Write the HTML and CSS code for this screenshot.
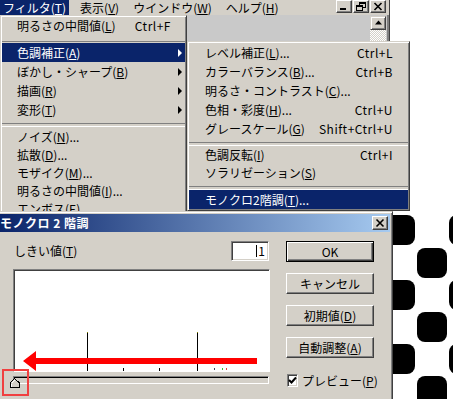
FILE: index.html
```html
<!DOCTYPE html>
<html lang="ja">
<head>
    <meta charset="UTF-8">
    <title>モノクロ 2 階調</title>
    <link rel="stylesheet" href="styles.css">
</head>
<body>
    <div class="app">
        <div class="menubar">
            <span class="menubar-item active">フィルタ(<u>T</u>)</span>
            <span class="menubar-item">表示(<u>V</u>)</span>
            <span class="menubar-item">ウインドウ(<u>W</u>)</span>
            <span class="menubar-item">ヘルプ(<u>H</u>)</span>
            <div class="window-controls">
                <span class="ctl-btn">
                    <svg width="14" height="11" viewBox="0 0 14 11"><rect x="3" y="7" width="6" height="2" fill="#000"/></svg>
                </span>
                <span class="ctl-btn">
                    <svg width="14" height="11" viewBox="0 0 14 11" shape-rendering="crispEdges">
                        <rect x="5.5" y="1.5" width="6" height="5" fill="none" stroke="#000"/>
                        <rect x="5" y="1" width="7" height="2" fill="#000"/>
                        <rect x="2.5" y="4.5" width="6" height="5" fill="#d4d0c8" stroke="#000"/>
                        <rect x="2" y="4" width="7" height="2" fill="#000"/>
                    </svg>
                </span>
                <span class="ctl-btn">
                    <svg width="14" height="11" viewBox="0 0 14 11"><path d="M3.5 2l7 7M10.5 2l-7 7" stroke="#000" stroke-width="1.6"/></svg>
                </span>
            </div>
        </div>
        <div class="workspace">
            <div class="scrollbar">
                <span class="scroll-btn">
                    <svg width="13" height="12" viewBox="0 0 13 12"><polygon points="6.5,3.5 10,7.5 3,7.5" fill="#000"/></svg>
                </span>
                <span class="scroll-track"></span>
            </div>
        </div>
    </div>

    <div class="menu filter-menu">
        <div class="menu-item">
            <span class="label">明るさの中間値(<u>L</u>)</span>
            <span class="shortcut">Ctrl+F</span>
        </div>
        <div class="separator first"></div>
        <div class="menu-section roomy">
            <div class="menu-item active">
                <span class="label">色調補正(<u>A</u>)</span>
                <span class="arrow"></span>
            </div>
            <div class="menu-item">
                <span class="label">ぼかし・シャープ(<u>B</u>)</span>
                <span class="arrow"></span>
            </div>
            <div class="menu-item">
                <span class="label">描画(<u>R</u>)</span>
                <span class="arrow"></span>
            </div>
            <div class="menu-item">
                <span class="label">変形(<u>T</u>)</span>
                <span class="arrow"></span>
            </div>
        </div>
        <div class="separator wide"></div>
        <div class="menu-section">
            <div class="menu-item"><span class="label">ノイズ(<u>N</u>)...</span></div>
            <div class="menu-item"><span class="label">拡散(<u>D</u>)...</span></div>
            <div class="menu-item"><span class="label">モザイク(<u>M</u>)...</span></div>
            <div class="menu-item"><span class="label">明るさの中間値(<u>I</u>)...</span></div>
            <div class="menu-item"><span class="label">エンボス(<u>E</u>)...</span></div>
        </div>
    </div>

    <div class="menu adjust-menu">
        <div class="menu-section roomy">
            <div class="menu-item">
                <span class="label">レベル補正(<u>L</u>)...</span>
                <span class="shortcut">Ctrl+L</span>
            </div>
            <div class="menu-item">
                <span class="label">カラーバランス(<u>B</u>)...</span>
                <span class="shortcut">Ctrl+B</span>
            </div>
            <div class="menu-item">
                <span class="label">明るさ・コントラスト(<u>C</u>)...</span>
            </div>
            <div class="menu-item">
                <span class="label">色相・彩度(<u>H</u>)...</span>
                <span class="shortcut">Ctrl+U</span>
            </div>
            <div class="menu-item">
                <span class="label">グレースケール(<u>G</u>)</span>
                <span class="shortcut">Shift+Ctrl+U</span>
            </div>
        </div>
        <div class="separator"></div>
        <div class="menu-section">
            <div class="menu-item">
                <span class="label">色調反転(<u>I</u>)</span>
                <span class="shortcut">Ctrl+I</span>
            </div>
            <div class="menu-item">
                <span class="label">ソラリゼーション(<u>S</u>)</span>
            </div>
        </div>
        <div class="separator"></div>
        <div class="menu-section roomy">
            <div class="menu-item active">
                <span class="label">モノクロ2階調(<u>T</u>)...</span>
            </div>
        </div>
    </div>

    <div class="dots">
        <svg width="73" height="186" viewBox="0 0 73 186">
            <rect x="5" y="2" width="30" height="30" rx="8" fill="#000"/>
            <rect x="5" y="67" width="30" height="30" rx="8" fill="#000"/>
            <rect x="5" y="131" width="30" height="30" rx="8" fill="#000"/>
            <rect x="37" y="35" width="30" height="30" rx="8" fill="#000"/>
            <rect x="37" y="99" width="30" height="30" rx="8" fill="#000"/>
            <rect x="37" y="163" width="30" height="30" rx="8" fill="#000"/>
            <rect x="69" y="2" width="30" height="30" rx="8" fill="#000"/>
            <rect x="69" y="67" width="30" height="30" rx="8" fill="#000"/>
            <rect x="69" y="131" width="30" height="30" rx="8" fill="#000"/>
        </svg>
    </div>

    <div class="dialog">
        <div class="titlebar">
            <span class="title">モノクロ 2 階調</span>
            <span class="caption-btn">
                <svg width="14" height="12" viewBox="0 0 14 12"><path d="M3.5 2.5l7 7M10.5 2.5l-7 7" stroke="#000" stroke-width="1.6"/></svg>
            </span>
        </div>
        <div class="dialog-body">
            <div class="left-col">
                <div class="field-row">
                    <span class="field-label">しきい値(<u>T</u>)</span>
                    <div class="text-input"><span class="caret"></span>1</div>
                </div>
                <div class="histogram">
                    <svg width="253" height="100" viewBox="0 0 253 100" shape-rendering="crispEdges">
                        <rect x="72" y="61" width="1" height="39" fill="#000"/>
                        <rect x="72" y="61" width="1" height="1" fill="#808000"/>
                        <rect x="182" y="61" width="1" height="39" fill="#000"/>
                        <rect x="182" y="61" width="1" height="1" fill="#808000"/>
                        <rect x="108" y="97" width="1" height="3" fill="#000"/>
                        <rect x="144" y="97" width="1" height="3" fill="#000"/>
                        <rect x="199" y="97" width="1" height="2" fill="#404060"/>
                        <rect x="207" y="97" width="1" height="2" fill="#30c030"/>
                        <rect x="211" y="97" width="1" height="2" fill="#e04040"/>
                    </svg>
                </div>
                <div class="slider">
                    <div class="track"></div>
                    <svg class="thumb" width="10" height="10" viewBox="0 0 10 10" shape-rendering="crispEdges">
                        <polygon points="4.5,0.5 9.5,5 9.5,9.5 0.5,9.5 0.5,4.5" fill="#d4d0c8" stroke="#000"/>
                        <path d="M1.5 5.5 L4.5 2.5 M1.5 5.5 V8.5" stroke="#fff" fill="none"/>
                    </svg>
                </div>
            </div>
            <div class="right-col">
                <button class="btn default">OK</button>
                <button class="btn">キャンセル</button>
                <button class="btn">初期値(<u>D</u>)</button>
                <button class="btn">自動調整(<u>A</u>)</button>
                <div class="check-row">
                    <span class="checkbox">
                        <svg width="9" height="9" viewBox="0 0 9 9"><path d="M1 4 L3.5 6.5 L8 1.5" stroke="#000" stroke-width="2" fill="none"/></svg>
                    </span>
                    <span>プレビュー(<u>P</u>)</span>
                </div>
            </div>
        </div>
    </div>

    <svg class="annotation" width="453" height="399" viewBox="0 0 453 399">
        <polygon points="23,361 36,351 36,358 257,358 257,364 36,364 36,371" fill="#ff0000"/>
        <rect x="3" y="370" width="25" height="25" fill="none" stroke="#f04040" stroke-width="2"/>
    </svg>
</body>
</html>
```

FILE: styles.css
```css
* {
    box-sizing: border-box;
}
body {
    margin: 0;
    width: 453px;
    height: 399px;
    overflow: hidden;
    position: relative;
    background-color: #fff;
    font-family: "Noto Sans CJK JP", "Noto Sans", sans-serif;
    font-size: 12px;
    line-height: 12px;
    color: #000;
}
u {
    text-decoration: underline;
    text-underline-offset: 1px;
}

/* main window behind the menus */
.app {
    position: absolute;
    left: 0;
    top: 0;
    width: 390px;
    height: 214px;
    border-right: 1px solid #404040;
    box-shadow: inset -2px 0 #808080;
    background-color: #c9c9c9;
    z-index: 1;
}
.menubar {
    display: flex;
    align-items: center;
    gap: 8px;
    height: 15px;
    padding-right: 3px;
    background-color: #d4d0c8;
}
.menubar-item {
    height: 15px;
    line-height: 15px;
    padding: 0 3px;
    white-space: nowrap;
}
.menubar-item.active {
    background-color: #0a246a;
    color: #fff;
}
.window-controls {
    display: flex;
    gap: 1px;
    margin-left: auto;
    align-self: flex-start;
}
.ctl-btn {
    display: flex;
    align-items: center;
    justify-content: center;
    width: 16px;
    height: 13px;
    background-color: #d4d0c8;
    border: 1px solid;
    border-color: #fff #404040 #404040 #fff;
    box-shadow: inset -1px -1px #808080;
}
.workspace {
    display: flex;
    justify-content: flex-end;
    padding-right: 3px;
}
.scrollbar {
    display: flex;
    flex-direction: column;
    width: 16px;
    margin-top: 1px;
}
.scroll-btn {
    display: flex;
    align-items: center;
    justify-content: center;
    height: 14px;
    background-color: #d4d0c8;
    border: 1px solid;
    border-color: #d4d0c8 #404040 #404040 #d4d0c8;
    box-shadow: inset 1px 1px #fff, inset -1px -1px #808080;
}
.scroll-track {
    height: 12px;
    background: repeating-conic-gradient(#d4d0c8 0 25%, #fff 0 50%) 0 0 / 2px 2px;
}

/* menus */
.menu {
    position: absolute;
    background-color: #d4d0c8;
    border: 1px solid;
    border-color: #d4d0c8 #404040 #404040 #d4d0c8;
    box-shadow: inset 1px 1px #fff, inset -1px -1px #808080;
    padding: 1px;
}
.filter-menu {
    left: 0;
    top: 15px;
    width: 187px;
    height: 210px;
    z-index: 2;
}
.adjust-menu {
    left: 187px;
    top: 41px;
    width: 223px;
    height: 170px;
    z-index: 3;
}
.menu-item {
    display: flex;
    align-items: center;
    height: 18px;
    padding: 0 3px 0 15px;
    white-space: nowrap;
}
.roomy .menu-item {
    height: 19px;
}
.menu-item.active {
    background-color: #0a246a;
    color: #fff;
}
.menu-item .label {
    flex: 1;
}
.shortcut {
    letter-spacing: 0.5px;
}
.filter-menu .shortcut {
    margin-right: 11px;
}
.adjust-menu .menu-item {
    padding: 0 15px 0 16px;
}
.arrow {
    width: 0;
    height: 0;
    border-left: 4px solid #000;
    border-top: 4px solid transparent;
    border-bottom: 4px solid transparent;
}
.menu-item.active .arrow {
    border-left-color: #fff;
}
.separator {
    height: 8px;
    padding-top: 4px;
}
.separator::before {
    content: "";
    display: block;
    height: 2px;
    border-top: 1px solid #808080;
    border-bottom: 1px solid #fff;
}
.separator.first {
    padding-top: 6px;
}
.separator.wide {
    height: 9px;
}

/* picture behind the dialog */
.dots {
    position: absolute;
    left: 380px;
    top: 213px;
    width: 73px;
    height: 186px;
    background-color: #fff;
    overflow: hidden;
    z-index: 1;
}
.dots svg {
    display: block;
    overflow: hidden;
}

/* dialog */
.dialog {
    position: absolute;
    left: -3px;
    top: 211px;
    width: 396px;
    height: 192px;
    background-color: #d4d0c8;
    border: 1px solid;
    border-color: #d4d0c8 #404040 #404040 #d4d0c8;
    box-shadow: inset 1px 1px #fff, inset -1px -1px #808080;
    padding: 2px;
    z-index: 4;
}
.titlebar {
    display: flex;
    align-items: center;
    height: 18px;
    padding: 0 2px 0 0;
    background: linear-gradient(to right, #0a246a, #a6caf0);
}
.title {
    flex: 1;
    color: #fff;
    font-weight: bold;
    letter-spacing: 0.5px;
    white-space: nowrap;
}
.caption-btn {
    display: flex;
    align-items: center;
    justify-content: center;
    width: 16px;
    height: 14px;
    background-color: #d4d0c8;
    border: 1px solid;
    border-color: #fff #404040 #404040 #fff;
    box-shadow: inset -1px -1px #808080;
}
.dialog-body {
    display: flex;
    gap: 16px;
    padding: 9px 0 0 13px;
}
.left-col {
    width: 257px;
}
.field-row {
    display: flex;
    align-items: center;
    justify-content: space-between;
    height: 20px;
    padding-left: 1px;
    padding-right: 1px;
}
.text-input {
    display: flex;
    align-items: center;
    justify-content: flex-end;
    width: 38px;
    height: 20px;
    padding-right: 3px;
    background-color: #fff;
    border: 1px solid;
    border-color: #808080 #fff #fff #808080;
    box-shadow: inset 1px 1px #404040, inset -1px -1px #d4d0c8;
}
.caret {
    width: 1px;
    height: 12px;
    margin-right: 1px;
    background-color: #000;
}
.histogram {
    margin-top: 8px;
    width: 257px;
    height: 103px;
    background-color: #fff;
    border: 1px solid;
    border-color: #808080 #fff #fff #808080;
    box-shadow: inset 1px 1px #404040;
    padding: 1px 0 0 1px;
}
.histogram svg {
    display: block;
}
.slider {
    position: relative;
    height: 28px;
    padding-top: 4px;
}
.track {
    width: 256px;
    height: 8px;
    background-color: #d4d0c8;
    border: 1px solid;
    border-color: #808080 #fff #fff #808080;
    box-shadow: inset 1px 1px #000;
}
.thumb {
    position: absolute;
    left: -3px;
    top: 6px;
}
.right-col {
    display: flex;
    flex-direction: column;
    gap: 11px;
    width: 88px;
}
.btn {
    width: 88px;
    height: 21px;
    padding: 0;
    font: inherit;
    color: #000;
    background-color: #d4d0c8;
    border: 1px solid;
    border-color: #fff #404040 #404040 #fff;
    box-shadow: inset -1px -1px #808080;
}
.btn.default {
    border-color: #000;
    box-shadow: inset 1px 1px #fff, inset -1px -1px #404040, inset -2px -2px #808080;
}
.check-row {
    display: flex;
    align-items: center;
    gap: 4px;
    margin-top: 5px;
    padding-left: 1px;
    white-space: nowrap;
}
.checkbox {
    display: flex;
    align-items: center;
    justify-content: center;
    width: 13px;
    height: 13px;
    background-color: #fff;
    border: 1px solid;
    border-color: #808080 #fff #fff #808080;
    box-shadow: inset 1px 1px #404040, inset -1px -1px #d4d0c8;
}

/* red callouts drawn over the shot */
.annotation {
    position: absolute;
    left: 0;
    top: 0;
    z-index: 5;
    pointer-events: none;
}
```
